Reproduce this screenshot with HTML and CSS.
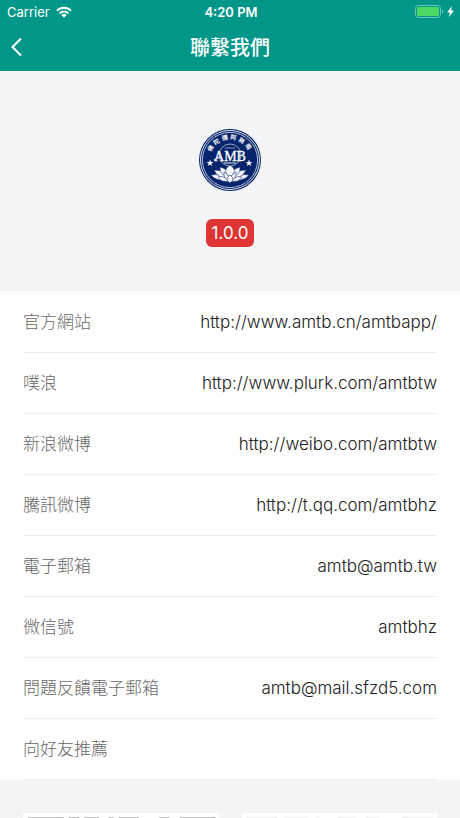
FILE: index.html
```html
<!DOCTYPE html>
<html lang="zh-Hant">
<head>
    <meta charset="utf-8">
    <meta name="viewport" content="width=device-width, initial-scale=1">
    <title>聯繫我們</title>
    <link rel="stylesheet" href="styles.css">
</head>
<body>
    <header class="header">
        <div class="status-bar">
            <div class="carrier">
                <span>Carrier</span>
                <svg width="16" height="12" viewBox="0 0 16 12" fill="none" stroke="#fff" stroke-width="2">
                    <path d="M1 4.6a10 10 0 0 1 14 0M3.6 7.3a6.2 6.2 0 0 1 8.8 0"/>
                    <path d="M5.4 9.1a3.7 3.7 0 0 1 5.2 0L8 11.8z" fill="#fff" stroke="none"/>
                </svg>
            </div>
            <div class="time">4:20 PM</div>
            <div class="battery">
                <svg width="40" height="14" viewBox="0 0 40 14">
                    <rect x=".5" y=".5" width="25" height="12" rx="3" fill="none" stroke="#70c4b8"/>
                    <rect x="2" y="2" width="22" height="9" rx="1.5" fill="#4cd964"/>
                    <path d="M27 4.5q1.5.5 1.5 2T27 8.5z" fill="#70c4b8"/>
                    <path d="M37 1l-5 6.500h3L33.500 12.500l5.500-7h-3z" fill="#fff"/>
                </svg>
            </div>
        </div>
        <div class="nav-bar">
            <button class="back" type="button" aria-label="返回">
                <svg width="12" height="20" viewBox="0 0 12 20" fill="none" stroke="#fff" stroke-width="2">
                    <path d="M11 1.500L2.500 10l8.500 8.500"/>
                </svg>
            </button>
            <h1 class="title">聯繫我們</h1>
        </div>
    </header>

    <main>
        <section class="about">
            <svg class="logo" width="64" height="64" viewBox="0 0 64 64">
                <defs>
                    <path id="arc" d="M11.500 32a20.500 20.500 0 0 1 41 0"/>
                    <path id="star" d="M0-3.600L.9-1.100 3.500-1.100 1.400.5 2.200 3 0 1.500-2.200 3-1.400.5-3.500-1.100-.9-1.100z"/>
                </defs>
                <circle cx="32" cy="32" r="31" fill="#06246b"/>
                <circle cx="32" cy="32" r="29.500" fill="none" stroke="#dfe5ef" stroke-width="1"/>
                <circle cx="32" cy="32" r="27.600" fill="none" stroke="#dfe5ef" stroke-width=".8"/>
                <text class="logo-arc"><textPath href="#arc" startOffset="50%" text-anchor="middle">佛陀彌阿無南</textPath></text>
                <circle cx="32" cy="27" r="11" fill="none" stroke="#b9c4da" stroke-width=".8"/>
                <path d="M27 20h10" stroke="#b9c4da" stroke-dasharray="1.500 .6"/>
                <text class="logo-name" x="32" y="33" text-anchor="middle">AMB</text>
                <path d="M16 32l6-3M26 35h12" stroke="#dfe5ef" stroke-width="1.200"/>
                <use href="#star" x="12" y="35" fill="#fff"/>
                <use href="#star" x="51" y="35" fill="#fff"/>
                <g fill="#f4f6fb" stroke="#06246b" stroke-width=".5">
                    <path d="M32 52Q18 54 13 47q9-2 19 5zM32 52q14 2 19-5-9-2-19 5z"/>
                    <path d="M32 51Q19 50 16 42q11 0 16 9zM32 51q13-1 16-9-11 0-16 9z"/>
                    <path d="M32 50Q21 47 22 39q9 2 10 11zM32 50q11-3 10-11-9 2-10 11z"/>
                    <path d="M32 49q-9-6 0-12 9 6 0 12z"/>
                    <path d="M32 53q-7-6-12-4 3 6 12 4zM32 53q7-6 12-4-3 6-12 4z"/>
                    <path d="M32 54q-7-4-6-10 6 3 6 10zM32 54q7-4 6-10-6 3-6 10z"/>
                    <path d="M32 55q-6-4 0-8 6 4 0 8z"/>
                </g>
            </svg>
            <span class="version">1.0.0</span>
        </section>

        <ul class="contacts">
            <li class="contact"><span class="label">官方網站</span><a class="value" href="http://www.amtb.cn/amtbapp/">http://www.amtb.cn/amtbapp/</a></li>
            <li class="contact"><span class="label">噗浪</span><a class="value" href="http://www.plurk.com/amtbtw">http://www.plurk.com/amtbtw</a></li>
            <li class="contact"><span class="label">新浪微博</span><a class="value" href="http://weibo.com/amtbtw">http://weibo.com/amtbtw</a></li>
            <li class="contact"><span class="label">騰訊微博</span><a class="value" href="http://t.qq.com/amtbhz">http://t.qq.com/amtbhz</a></li>
            <li class="contact"><span class="label">電子郵箱</span><a class="value" href="mailto:amtb@amtb.tw">amtb@amtb.tw</a></li>
            <li class="contact"><span class="label">微信號</span><span class="value">amtbhz</span></li>
            <li class="contact"><span class="label">問題反饋電子郵箱</span><a class="value" href="mailto:amtb@mail.sfzd5.com">amtb@mail.sfzd5.com</a></li>
            <li class="contact"><a class="label" href="#share">向好友推薦</a></li>
        </ul>

        <section class="codes" id="share">
            <svg class="code" viewBox="0 0 196 196">
                <path d="M5 4h36v36H5zM46 4h10v5H46zM61 4h15v5H61zM86 4h5v5h-5zM96 4h20v5H96zM137 4h10v5h-10zM157 4h36v36h-36z"/>
            </svg>
            <svg class="code code-light" viewBox="0 0 196 196">
                <path d="M5 4h30v30H5zM42 4h24v5H42zM74 4h4v5h-4zM96 4h18v5H96zM125 4h13v5h-13zM160 4h31v30h-31z"/>
            </svg>
        </section>
    </main>
</body>
</html>
```

FILE: styles.css
```css
* {
    box-sizing: border-box;
}

body {
    margin: 0;
    height: 100vh;
    overflow: hidden;
    background-color: #f3f4f6;
    font-family: Inter, "Noto Sans CJK TC", sans-serif;
    color: #333;
}

.header {
    background-color: #009688;
    color: #fff;
}

.status-bar {
    display: grid;
    grid-template-columns: 1fr auto 1fr;
    align-items: center;
    height: 24px;
    padding: 0 5px 0 7px;
    font-size: 13px;
}

.carrier {
    display: flex;
    align-items: center;
    gap: 6px;
}

.time {
    font-weight: 600;
}

.battery {
    display: flex;
    justify-content: flex-end;
}

.nav-bar {
    display: grid;
    grid-template-columns: 40px 1fr 40px;
    align-items: center;
    height: 47px;
    padding-bottom: 2px;
}

.back {
    display: flex;
    padding: 0 10px;
    border: none;
    background: none;
    cursor: pointer;
}

.title {
    margin: 0;
    font-size: 20px;
    font-weight: 500;
    text-align: center;
}

.about {
    display: flex;
    flex-direction: column;
    align-items: center;
    gap: 27px;
    padding: 57px 0 44px;
}

.logo-arc {
    font-size: 6px;
    font-weight: 700;
    letter-spacing: 2px;
    fill: #fff;
}

.logo-name {
    font-family: "Liberation Serif", serif;
    font-size: 14px;
    fill: #fff;
    stroke: #fff;
    stroke-width: .3px;
}

.version {
    padding: 0 6px;
    border-radius: 6px;
    background-color: #e03535;
    color: #fff;
    font-size: 17px;
    line-height: 28px;
}

.contacts {
    margin: 0;
    padding: 1px 23px 0;
    list-style: none;
    background-color: #fff;
}

.contact {
    display: flex;
    justify-content: space-between;
    border-bottom: 1px solid #ededed;
    font-size: 17px;
    line-height: 60px;
}

.label {
    color: #666;
    font-weight: 300;
    text-decoration: none;
}

.value {
    color: #222;
    font-weight: 300;
    text-decoration: none;
}

.codes {
    display: grid;
    grid-template-columns: 1fr 1fr;
    gap: 23px;
    padding: 33px 23px;
}

.code {
    width: 100%;
    background-color: #fff;
    fill: #bbb;
}

.code-light {
    fill: #f0f0f0;
}
```
